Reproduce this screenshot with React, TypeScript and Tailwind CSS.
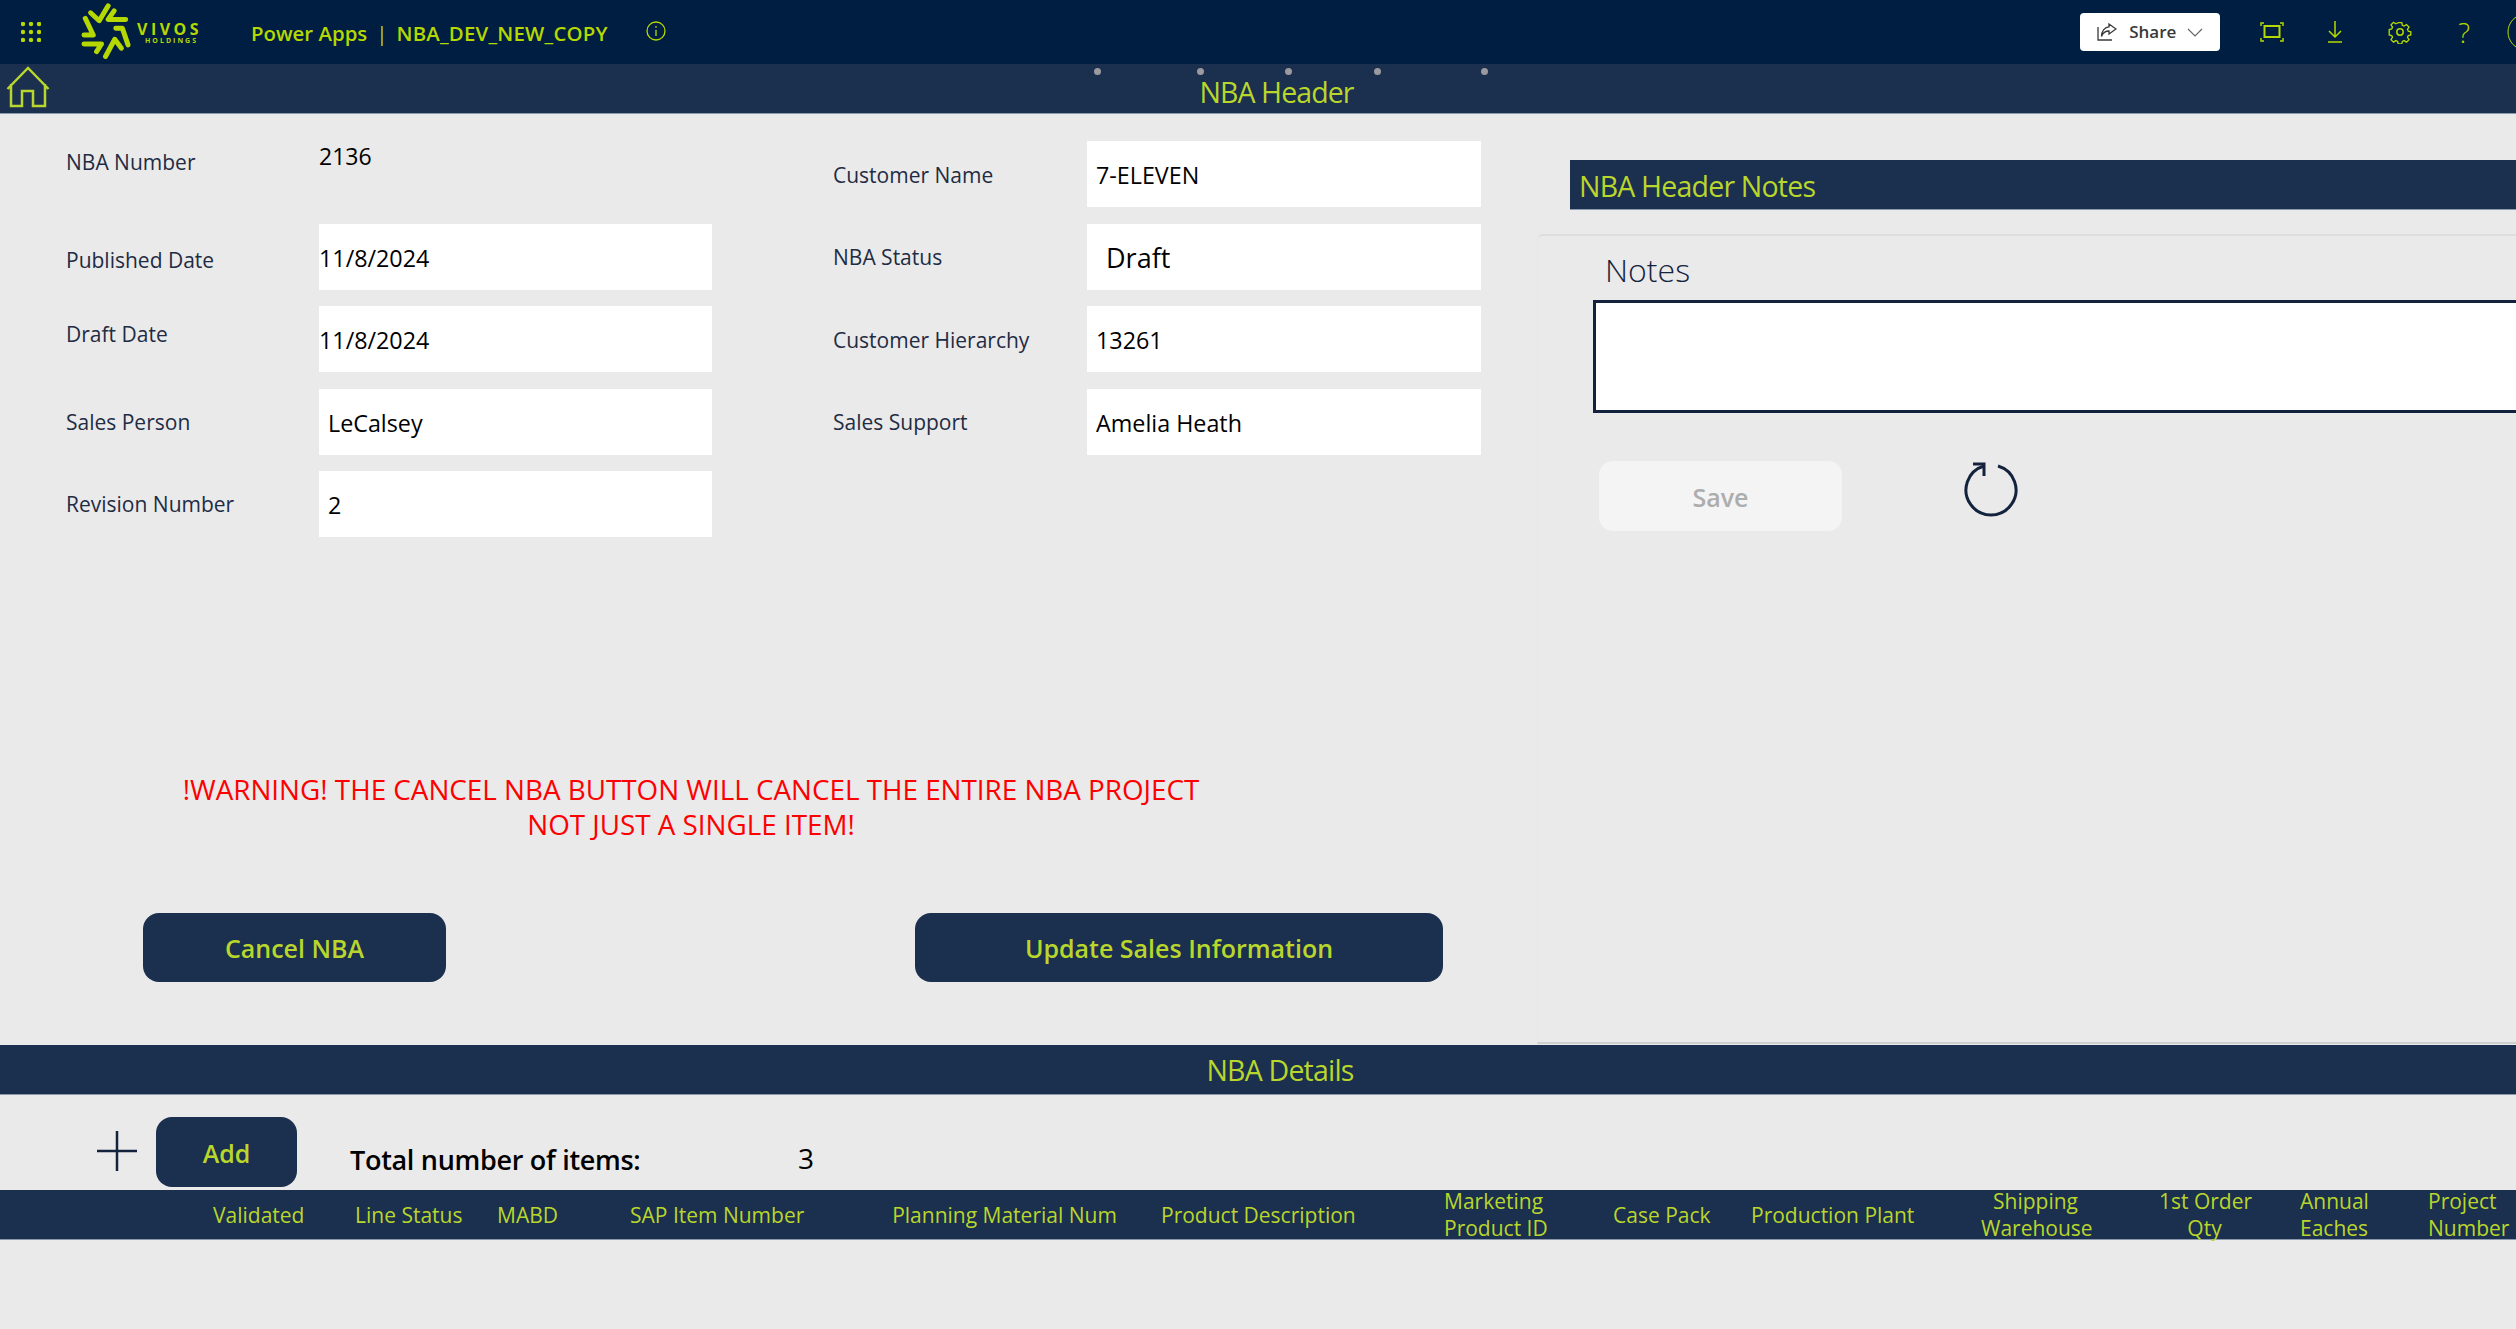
const lime = "text-[#b9d62c]";

function Logo() {
  return (
    <svg width="53" height="64" viewBox="60 0 160 192" className="shrink-0">
      <g fill="none" stroke="#b5d800" strokeWidth="15" strokeLinecap="round" strokeLinejoin="round">
        <path d="M145 17 L118 62 L92 38" />
        <path d="M163 32 L145 58 L198 58" />
        <path d="M76 55 L100 105 L72 105" />
        <path d="M168 85 L188 85 L205 135" />
        <path d="M137 170 L165 118 L185 145" />
        <path d="M72 132 L125 132 L110 155" />
      </g>
    </svg>
  );
}

function Field({ value, big, flush }: { value: string; big?: boolean; flush?: boolean }) {
  return (
    <div className={`flex h-[66px] items-center bg-white pt-[3px] text-black ${big ? "pl-[19px] text-[27px]" : "text-[23.3px]"} ${flush ? "" : big ? "" : "pl-[9px]"}`}>
      {value}
    </div>
  );
}

function Label({ text, className = "" }: { text: string; className?: string }) {
  return <div className={`flex items-center pt-[2px] text-[21px] text-[#1f2c44] ${className}`}>{text}</div>;
}

function NavButton({ label, className }: { label: string; className: string }) {
  return (
    <button type="button" className={`flex items-center justify-center rounded-[16px] bg-[#1b2f4f] pt-[3px] text-[25px] font-semibold ${lime} ${className}`}>
      {label}
    </button>
  );
}

function Column({ lines, className, left }: { lines: string[]; className: string; left?: boolean }) {
  return (
    <div className={`flex flex-col justify-center pt-[1px] text-[21px] leading-[27px] ${left ? "text-left" : "text-center"} ${className}`}>
      {lines.map((line) => (
        <span key={line} className="whitespace-nowrap">{line}</span>
      ))}
    </div>
  );
}

export default function App() {
  return (
    <div className="flex h-[1329px] w-[2516px] flex-col overflow-hidden bg-[#eaeaea] font-['Open_Sans','Noto_Sans',sans-serif]">
      {/* Power Apps bar */}
      <header className="flex h-[64px] shrink-0 items-center bg-[#001d42] text-[#b5d800]">
        <svg width="20" height="20" viewBox="0 0 20 20" fill="#b5d800" className="ml-[21px]">
          {[2, 10, 18].map((cy) => [2, 10, 18].map((cx) => <circle key={`${cx}${cy}`} cx={cx} cy={cy} r="2.2" />))}
        </svg>
        <div className="ml-[39px] flex items-center">
          <Logo />
          <div className="ml-[4px] flex w-[68px] flex-col items-start pt-[3px]">
            <span className="text-[16px] leading-[15px] font-bold tracking-[3.5px]">VIVOS</span>
            <span className="ml-[8px] text-[7px] leading-[8px] font-bold tracking-[2px]">HOLDINGS</span>
          </div>
        </div>
        <div className="ml-[46px] flex items-center gap-[9px] pt-[2px] text-[20.4px] font-semibold">
          <span>Power Apps</span>
          <span className="font-normal">|</span>
          <span className="tracking-[0.2px]">NBA_DEV_NEW_COPY</span>
        </div>
        <svg width="20" height="20" viewBox="0 0 20 20" fill="none" stroke="#b5d800" strokeWidth="1.3" className="ml-[38px] mb-[2px]">
          <circle cx="10" cy="10" r="9" />
          <path d="M10 9v6M10 5v1.8" />
        </svg>
        <div className="flex flex-1 items-center justify-end">
          <button type="button" className="flex h-[38px] w-[140px] items-center rounded-[4px] bg-white pl-[17px] text-[17px] font-semibold text-[#3a3a3a]">
            <svg width="20" height="18" viewBox="0 0 20 18" fill="none" stroke="#3a3a3a" strokeWidth="1.3">
              <path d="M1 4v13h14" />
              <path d="M12 1l7 5-7 5V8C8 8 6 9.500 4.500 13.500 4.500 8 8 4 12 3.800z" />
            </svg>
            <span className="ml-[12px]">Share</span>
            <svg width="16" height="9" viewBox="0 0 16 9" fill="none" stroke="#666" strokeWidth="1.2" className="ml-[11px]">
              <path d="M1 1l7 7 7-7" />
            </svg>
          </button>
          <svg width="24" height="20" viewBox="0 0 24 20" fill="none" stroke="#b5d800" strokeWidth="1.5" className="ml-[40px]">
            <rect x="4.500" y="4" width="15" height="11" strokeWidth="2" />
            <path d="M1 4V1h3M20 1h3v3M1 16v3h3M20 19h3v-3" />
          </svg>
          <svg width="16" height="24" viewBox="0 0 16 24" fill="none" stroke="#b5d800" strokeWidth="1.5" className="ml-[43px]">
            <path d="M8 1v16M2 11l6 6 6-6M1 22h14" />
          </svg>
          <svg width="24" height="24" viewBox="0 0 24 24" fill="none" stroke="#b5d800" strokeWidth="1.5" className="ml-[45px]">
            <circle cx="12" cy="12" r="3.200" />
            <path d="M10 1.500h4l.6 3 2 .9 2.600-1.700 2.800 2.800-1.700 2.600.9 2 2.800.6v3.600l-2.800.6-.9 2 1.700 2.600-2.800 2.800-2.600-1.700-2 .9-.6 2.800h-4l-.6-2.800-2-.9-2.600 1.700-2.800-2.800 1.700-2.600-.9-2-2.800-.6V9.200l2.800-.6.9-2L2 4l2.800-2.800 2.600 1.700 2-.9z" transform="translate(1.200 1.200) scale(.9)" />
          </svg>
          <span className="ml-[46px] text-[28px] font-light leading-none">?</span>
          <svg width="9" height="38" viewBox="0 0 9 38" fill="none" stroke="#b5d800" strokeWidth="1" className="ml-[37px]">
            <circle cx="19" cy="19" r="18" />
          </svg>
        </div>
      </header>

      {/* NBA Header */}
      <div className="relative flex h-[50px] shrink-0 items-end justify-center border-b border-[#8b98ac] bg-[#1b2f4f] pb-[3px] pl-[37px]">
        <svg width="44" height="42" viewBox="0 0 44 42" fill="none" stroke="#b9d62c" strokeWidth="2.500" className="absolute left-[6px] top-[2px]">
          <path d="M1.500 23L22 2l20.500 21M5 18v22h11V25h11v15h12V18" />
        </svg>
        <div className="absolute left-[1094px] top-[4px]">
          {[0, 103, 191, 280, 387].map((x) => (
            <span key={x} className="absolute top-0 h-[7px] w-[7px] rounded-full bg-[#9a9a9f]" style={{ left: x }} />
          ))}
        </div>
        <span className={`text-[28.500px] leading-[36px] tracking-[-0.9px] ${lime}`}>NBA Header</span>
      </div>

      {/* Form and notes */}
      <div className="flex h-[931px] shrink-0">
        <section className="flex w-[1537px] shrink-0 flex-col">
          <div className="mt-[27px] ml-[66px] grid grid-cols-[253px_393px_121px_254px_394px] auto-rows-[66px] gap-y-[16.500px]">
            <Label text="NBA Number" className="mb-[24px]" />
            <div className="mb-[36px] flex items-center text-[23px] text-black">2136</div>
            <div />
            <Label text="Customer Name" className="pt-[4px]" />
            <Field value="7-ELEVEN" />

            <Label text="Published Date" className="mt-[6px]" />
            <Field value="11/8/2024" flush />
            <div />
            <Label text="NBA Status" className="pt-[3px]" />
            <Field value="Draft" big />

            <Label text="Draft Date" className="mb-[10px]" />
            <Field value="11/8/2024" flush />
            <div />
            <Label text="Customer Hierarchy" className="pt-[4px]" />
            <Field value="13261" />

            <Label text="Sales Person" />
            <Field value="LeCalsey" />
            <div />
            <Label text="Sales Support" />
            <Field value="Amelia Heath" />

            <Label text="Revision Number" />
            <Field value="2" />
          </div>

          <p className="mt-[235px] ml-[150px] w-[1082px] text-center text-[27.800px] leading-[35px] text-[#ff0000]">
            !WARNING! THE CANCEL NBA BUTTON WILL CANCEL THE ENTIRE NBA PROJECT
            <br />
            NOT JUST A SINGLE ITEM!
          </p>

          <div className="mt-[71px] ml-[143px] flex">
            <NavButton label="Cancel NBA" className="h-[69px] w-[303px]" />
            <NavButton label="Update Sales Information" className="ml-[469px] h-[69px] w-[528px]" />
          </div>
        </section>

        <section className="flex min-w-0 flex-1 flex-col">
          <div className="mt-[46px] ml-[33px] flex h-[50px] shrink-0 items-center border-b border-[#8b98ac] bg-[#1b2f4f] pt-[4px] pl-[9px]">
            <span className={`text-[28.500px] tracking-[-0.8px] ${lime}`}>NBA Header Notes</span>
          </div>
          <div className="mt-[24px] mb-[1px] flex-1 rounded-tl-[6px] border-t-2 border-b-2 border-l border-[#dedede] border-b-[#cfcfcf] border-l-[#e7e7e7] pl-[55px]">
            <div className="mt-[12px] ml-[12px] text-[32px] font-light leading-[44px] text-[#14233d]">Notes</div>
            <div className="mt-[8px] h-[113px] border-[3px] border-r-0 border-[#14233d] bg-white" />
            <div className="mt-[48px] ml-[6px] flex items-start">
              <button type="button" className="flex h-[70px] w-[243px] items-center justify-center rounded-[14px] bg-[#f4f4f4] pt-[4px] text-[25px] font-semibold text-[#adadad]">
                Save
              </button>
              <svg width="54" height="56" viewBox="0 0 54 56" fill="none" stroke="#14233d" strokeWidth="3" className="ml-[122px]">
                <path d="M20 5A25 25 0 1 0 34 5" />
                <path d="M9 3h11v12" />
              </svg>
            </div>
          </div>
        </section>
      </div>

      {/* NBA Details */}
      <div className={`flex h-[50px] shrink-0 items-center justify-center border-b border-[#8b98ac] bg-[#1b2f4f] pt-[2px] pl-[44px] text-[28.500px] tracking-[-0.8px] ${lime}`}>
        NBA Details
      </div>

      <div className="flex h-[95px] shrink-0 items-start">
        <svg width="40" height="40" viewBox="0 0 40 40" stroke="#14233d" strokeWidth="2.500" className="mt-[36px] ml-[97px]">
          <path d="M20 0v40M0 20h40" />
        </svg>
        <NavButton label="Add" className="mt-[22px] ml-[19px] h-[70px] w-[141px]" />
        <div className="mt-[45px] ml-[53px] w-[448px] text-[27px] font-semibold leading-[40px] tracking-[-0.3px] text-black">Total number of items:</div>
        <div className="mt-[43px] text-[28px] leading-[40px] text-black">3</div>
      </div>

      {/* Grid header */}
      <div className={`flex h-[50px] shrink-0 border-b border-[#8b98ac] bg-[#1b2f4f] ${lime}`}>
        <Column lines={["Validated"]} className="ml-[213px] w-[90px]" />
        <Column lines={["Line Status"]} className="ml-[52px] w-[104px]" />
        <Column lines={["MABD"]} className="ml-[38px] w-[61px]" />
        <Column lines={["SAP Item Number"]} className="ml-[72px] w-[174px]" />
        <Column lines={["Planning Material Num"]} className="ml-[88px] w-[225px]" />
        <Column lines={["Product Description"]} className="ml-[44px] w-[193px]" />
        <Column lines={["Marketing", "Product ID"]} className="ml-[90px] w-[104px]" left />
        <Column lines={["Case Pack"]} className="ml-[65px] w-[97px]" />
        <Column lines={["Production Plant"]} className="ml-[41px] w-[162px]" />
        <Column lines={["Shipping", "Warehouse"]} className="ml-[68px] w-[109px]" />
        <Column lines={["1st Order", "Qty"]} className="ml-[69px] w-[91px]" />
        <Column lines={["Annual", "Eaches"]} className="ml-[50px] w-[68px]" left />
        <Column lines={["Project", "Number"]} className="ml-[60px] w-[80px]" left />
      </div>
    </div>
  );
}
